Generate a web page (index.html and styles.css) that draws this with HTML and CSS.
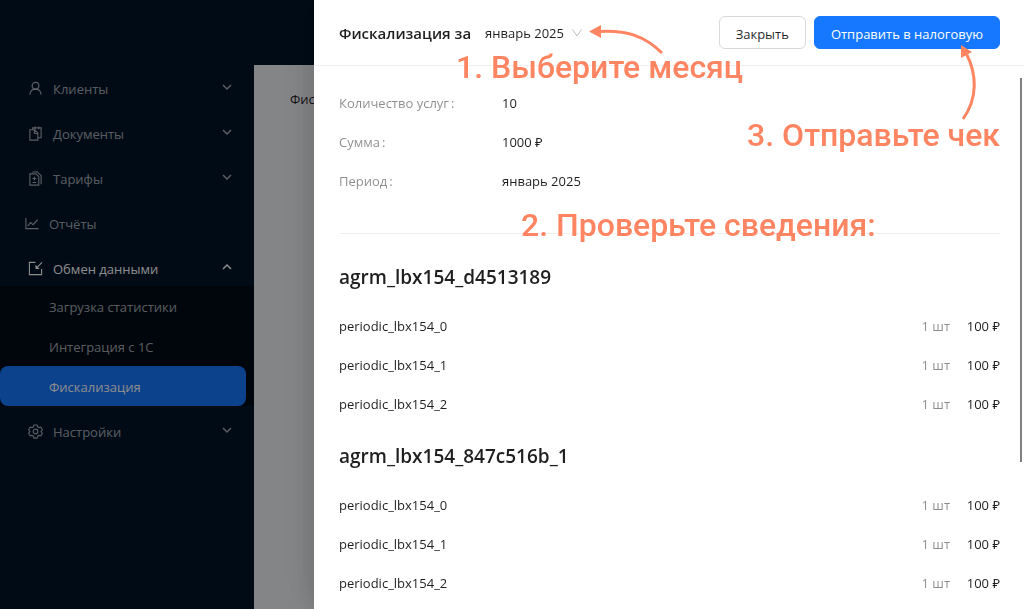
FILE: index.html
```
<!DOCTYPE html>
<html lang="ru">
    <head>
        <meta charset="utf-8">
        <meta name="viewport" content="width=device-width">
        <title>Фискализация</title>
        <link rel="stylesheet" href="styles.css">
    </head>
    <body>
        <div class="layout">
            <header class="topbar"></header>

            <nav class="sidebar">
                <a class="menu-item" href="#">
                    <svg class="icon" viewBox="0 0 16 16"><circle cx="8" cy="5" r="3.6"/><path d="M2 14.5c.3-3.600 2.700-5.900 6-5.900s5.700 2.300 6 5.900"/></svg>
                    <span>Клиенты</span>
                    <svg class="chevron" viewBox="0 0 10 10"><path d="M1 3l4 4 4-4"/></svg>
                </a>
                <a class="menu-item" href="#">
                    <svg class="icon" viewBox="0 0 16 16"><path d="M2 4h5l3.500 3.500v7.500H2zM6.800 4v4h3.700M5 4V2h9v10.500h-3.500M7.500 .5v3M11.500 .5v3"/></svg>
                    <span>Документы</span>
                    <svg class="chevron" viewBox="0 0 10 10"><path d="M1 3l4 4 4-4"/></svg>
                </a>
                <a class="menu-item" href="#">
                    <svg class="icon" viewBox="0 0 16 16"><path d="M2 3h6.500l3 3v9H2zM4.500 1h5.500l4 4v9M6.800 6v4M4.800 8h4M4.800 12.200h4"/></svg>
                    <span>Тарифы</span>
                    <svg class="chevron" viewBox="0 0 10 10"><path d="M1 3l4 4 4-4"/></svg>
                </a>
                <a class="menu-item menu-item-flat" href="#">
                    <svg class="icon" viewBox="0 0 16 16"><path d="M2 2v11.500h13.500M4 10.500l3-3.500 2.700 2.200L14.500 4"/></svg>
                    <span>Отчёты</span>
                </a>
                <a class="menu-item menu-item-open" href="#">
                    <svg class="icon" viewBox="0 0 16 16"><path d="M8 1.500H1.500v13h13V8.500M15 1.500L10 6.500"/><path class="solid" d="M8 4v4.500h4.500z"/></svg>
                    <span>Обмен данными</span>
                    <svg class="chevron" viewBox="0 0 10 10"><path d="M1 7l4-4 4 4"/></svg>
                </a>
                <div class="submenu">
                    <a class="submenu-item" href="#">Загрузка статистики</a>
                    <a class="submenu-item" href="#">Интеграция с 1С</a>
                    <a class="submenu-item selected" href="#">Фискализация</a>
                </div>
                <a class="menu-item" href="#">
                    <svg class="icon" viewBox="0 0 16 16"><path d="M6.300 1h3.400l.6 2 1.400.8 2-.5 1.700 3-1.500 1.700 1.500 1.700-1.700 3-2-.5-1.400.8-.6 2H6.300l-.6-2-1.400-.8-2 .5-1.700-3L2.100 8 .6 6.300l1.700-3 2 .5L5.700 3z"/><circle cx="8" cy="8" r="2.500"/></svg>
                    <span>Настройки</span>
                    <svg class="chevron" viewBox="0 0 10 10"><path d="M1 3l4 4 4-4"/></svg>
                </a>
            </nav>

            <main class="content">Фис</main>
        </div>

        <div class="mask">
            <section class="drawer">
                <header class="drawer-header">
                    <label class="drawer-title" for="month">Фискализация за</label>
                    <div class="month">
                        <select id="month">
                            <option>январь 2025</option>
                        </select>
                        <svg class="month-arrow" viewBox="0 0 10 10"><path d="M0.500 1.500l4.500 6.500 4.500-6.500"/></svg>
                    </div>
                    <div class="actions">
                        <button class="btn" type="button">Закрыть</button>
                        <button class="btn btn-primary" type="button">Отправить в налоговую</button>
                    </div>
                </header>

                <div class="drawer-body">
                    <dl class="summary">
                        <dt>Количество услуг<span class="colon">:</span></dt>
                        <dd>10</dd>
                        <dt>Сумма<span class="colon">:</span></dt>
                        <dd>1000 ₽</dd>
                        <dt>Период<span class="colon">:</span></dt>
                        <dd>январь 2025</dd>
                    </dl>

                    <hr class="divider">

                    <h2 class="agreement">agrm_lbx154_d4513189</h2>
                    <table class="services">
                        <tr><td>periodic_lbx154_0</td><td class="count">1 шт</td><td class="price">100 ₽</td></tr>
                        <tr><td>periodic_lbx154_1</td><td class="count">1 шт</td><td class="price">100 ₽</td></tr>
                        <tr><td>periodic_lbx154_2</td><td class="count">1 шт</td><td class="price">100 ₽</td></tr>
                    </table>

                    <h2 class="agreement">agrm_lbx154_847c516b_1</h2>
                    <table class="services">
                        <tr><td>periodic_lbx154_0</td><td class="count">1 шт</td><td class="price">100 ₽</td></tr>
                        <tr><td>periodic_lbx154_1</td><td class="count">1 шт</td><td class="price">100 ₽</td></tr>
                        <tr><td>periodic_lbx154_2</td><td class="count">1 шт</td><td class="price">100 ₽</td></tr>
                    </table>
                </div>

                <div class="scroll-thumb"></div>

                <!-- Hints over the form -->
                <p class="hint hint-month">1. Выберите месяц</p>
                <p class="hint hint-check">2. Проверьте сведения:</p>
                <p class="hint hint-send">3. Отправьте чек</p>
                <svg class="hint-arrow hint-arrow-month" viewBox="0 0 76 30">
                    <path class="line" d="M10 6.500C38 5 56 11 73 28"/>
                    <path class="head" d="M0 6.500L12 0v13z"/>
                </svg>
                <svg class="hint-arrow hint-arrow-send" viewBox="0 0 22 76">
                    <path class="line" d="M6 8C17 29 18 53 3 74"/>
                    <path class="head" d="M1 0l11 7-11 6z"/>
                </svg>
            </section>
        </div>
    </body>
</html>
```
FILE: styles.css
```
* {
    box-sizing: border-box;
}
body {
    margin: 0;
    font-family: 'Open Sans', 'Noto Sans', sans-serif;
    font-size: 13px;
    color: rgba(0, 0, 0, 0.88);
}
svg {
    fill: none;
    stroke: currentColor;
}

/* Page under the drawer */
.layout {
    display: grid;
    grid-template-columns: 254px 1fr;
    grid-template-rows: 65px 1fr;
    min-height: 100vh;
    background-color: #f0f2f5;
}
.topbar {
    grid-column: 1 / 3;
    background-color: #001529;
}
.sidebar {
    padding-top: 4px;
    background-color: #001529;
}
.content {
    padding: 25px 36px;
}
.menu-item {
    display: flex;
    align-items: center;
    height: 36px;
    margin-bottom: 9px;
    padding: 4px 22px 0 28px;
    color: rgba(255, 255, 255, 0.65);
    text-decoration: none;
}
.menu-item-flat {
    padding-left: 24px;
}
.menu-item-open {
    margin-bottom: 1px;
    color: #fff;
}
.icon {
    width: 15px;
    height: 15px;
    margin: 0 10px 2px 0;
    stroke-width: 1.2;
}
.icon .solid {
    fill: currentColor;
    stroke: none;
}
.chevron {
    width: 10px;
    height: 10px;
    margin: 0 0 4px auto;
    stroke-width: 1.5;
}
.submenu {
    margin-bottom: 6px;
    background-color: #000c17;
}
.submenu-item {
    display: block;
    height: 40px;
    padding-left: 49px;
    line-height: 42px;
    color: rgba(255, 255, 255, 0.65);
    text-decoration: none;
}
.selected {
    margin-right: 8px;
    border-radius: 8px;
    background-color: #1677ff;
    color: #fff;
}

/* Drawer */
.mask {
    position: fixed;
    inset: 0;
    display: flex;
    justify-content: flex-end;
    background-color: rgba(0, 0, 0, 0.45);
}
.drawer {
    position: relative;
    display: flex;
    flex-direction: column;
    width: calc(100% - 314px);
    background-color: #fff;
    box-shadow: -6px 0 16px rgba(0, 0, 0, 0.08), -9px 0 28px rgba(0, 0, 0, 0.05), -12px 0 48px rgba(0, 0, 0, 0.03);
}
.drawer-header {
    display: flex;
    flex-shrink: 0;
    align-items: center;
    height: 66px;
    padding: 0 24px 0 25px;
    border-bottom: 1px solid #f0f0f0;
}
.drawer-title {
    font-size: 15px;
    font-weight: 600;
}
.month {
    display: flex;
    align-items: center;
    margin-left: 14px;
}
.month select {
    appearance: none;
    padding: 1px 0 0;
    border: none;
    background: none;
    font: inherit;
    color: inherit;
}
.month-arrow {
    width: 10px;
    height: 10px;
    margin-left: 8px;
    color: #bfbfbf;
}
.actions {
    display: flex;
    gap: 8px;
    margin-left: auto;
}
.btn {
    height: 33px;
    padding: 2px 16px 0;
    border: 1px solid #d9d9d9;
    border-radius: 6px;
    background-color: #fff;
    font: inherit;
    color: inherit;
    cursor: pointer;
}
.btn-primary {
    border-color: #1677ff;
    background-color: #1677ff;
    color: #fff;
}
.drawer-body {
    flex: 1;
    min-height: 0;
    padding: 18px 24px 0 25px;
    overflow: auto;
    scrollbar-width: none;
}
.summary {
    display: grid;
    grid-template-columns: 163px 1fr;
    margin: 0;
    line-height: 39px;
}
.summary dt {
    color: rgba(0, 0, 0, 0.45);
}
.summary dd {
    margin: 0;
}
.colon {
    margin-left: 2px;
}
.divider {
    height: 1px;
    margin: 32px 0 28px;
    border: none;
    background-color: #f0f0f0;
}
.agreement {
    margin: 18px 0 14px;
    font-size: 19px;
    font-weight: 600;
    line-height: 30px;
}
.services {
    width: 100%;
    border-collapse: collapse;
}
.services td {
    height: 39px;
    padding: 0;
}
.services .count {
    color: rgba(0, 0, 0, 0.45);
    text-align: right;
}
.services .price {
    width: 50px;
    text-align: right;
}
.scroll-thumb {
    position: absolute;
    top: 78px;
    right: 2px;
    width: 2px;
    height: 384px;
    background-color: #808080;
}

/* Hints */
.hint {
    position: absolute;
    margin: 0;
    font-family: Roboto, sans-serif;
    font-size: 32px;
    font-weight: 500;
    line-height: 40px;
    white-space: nowrap;
    color: #ff8562;
}
.hint-month {
    top: 47px;
    left: 142px;
}
.hint-check {
    top: 205px;
    left: 207px;
}
.hint-send {
    top: 115px;
    right: 24px;
}
.hint-arrow {
    position: absolute;
    color: #ff8562;
}
.hint-arrow .line {
    stroke-width: 3;
}
.hint-arrow .head {
    fill: currentColor;
    stroke: none;
}
.hint-arrow-month {
    top: 25px;
    left: 275px;
    width: 76px;
    height: 30px;
}
.hint-arrow-send {
    top: 45px;
    right: 42px;
    width: 22px;
    height: 76px;
}
```
